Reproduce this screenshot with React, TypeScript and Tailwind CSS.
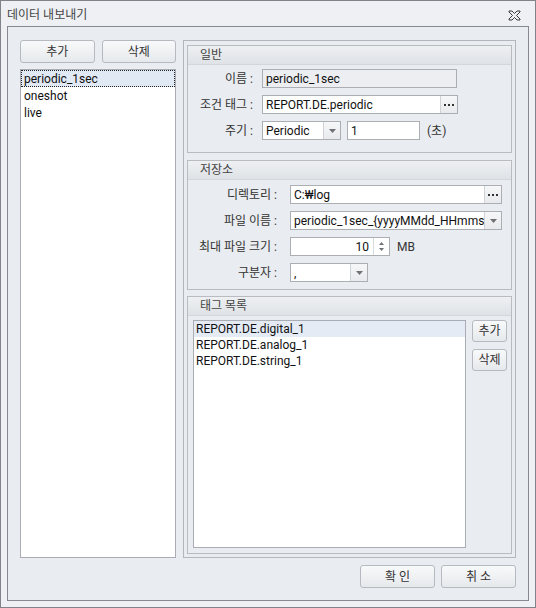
import React from 'react';

function Btn({ children, className = '' }: { children: React.ReactNode; className?: string }) {
  return (
    <div
      className={`flex items-center justify-center rounded-[3px] border border-[#b6bac0] bg-linear-to-b from-[#f8f9fa] to-[#e6e9ec] text-[12px] text-[#333] ${className}`}
    >
      {children}
    </div>
  );
}

function Group({ title, children, className = '' }: { title: string; children: React.ReactNode; className?: string }) {
  return (
    <div className={`flex flex-col border border-[#b8bcc1] ${className}`}>
      <div className="h-[19px] shrink-0 flex items-center pl-[12px] border-b border-[#d3d6da] bg-linear-to-b from-[#eef0f2] to-[#dfe2e6] text-[12px] text-[#444]">
        {title}
      </div>
      {children}
    </div>
  );
}

function Arrow() {
  return (
    <svg width="7" height="4" viewBox="0 0 7 4">
      <path d="M0 0h7L3.5 4z" fill="#6e7175" />
    </svg>
  );
}

function Dots() {
  return (
    <div className="flex gap-[2px]">
      <span className="w-[2px] h-[2px] bg-[#333]" />
      <span className="w-[2px] h-[2px] bg-[#333]" />
      <span className="w-[2px] h-[2px] bg-[#333]" />
    </div>
  );
}

function SideButton({ children }: { children: React.ReactNode }) {
  return (
    <div className="w-[17px] h-full shrink-0 flex items-center justify-center border-l border-[#cfd2d6] bg-linear-to-b from-[#f6f7f8] to-[#e8eaed]">
      {children}
    </div>
  );
}

function Field({
  value,
  width,
  button,
  readOnly,
  alignRight,
}: {
  value: string;
  width: string;
  button?: React.ReactNode;
  readOnly?: boolean;
  alignRight?: boolean;
}) {
  return (
    <div
      className={`h-[19px] flex items-stretch border border-[#abafb4] ${readOnly ? 'bg-[#eceef1]' : 'bg-white'} ${width}`}
    >
      <div
        className={`flex-1 min-w-0 flex items-center overflow-hidden whitespace-nowrap px-[3px] text-[12px] text-[#111] ${alignRight ? 'justify-end pr-[4px]' : ''}`}
      >
        {value}
      </div>
      {button}
    </div>
  );
}

function Row({ label, labelW, children }: { label: string; labelW: string; children: React.ReactNode }) {
  return (
    <div className="flex items-center h-[19px]">
      <div className={`text-right text-[12px] text-[#333] shrink-0 ${labelW}`}>{label}</div>
      {children}
    </div>
  );
}

function Spinner() {
  return (
    <div className="w-[16px] h-full shrink-0 flex flex-col items-center justify-center gap-[3px] border-l border-[#d8dbde]">
      <svg width="5" height="3" viewBox="0 0 5 3">
        <path d="M2.5 0L5 3H0z" fill="#6e7175" />
      </svg>
      <svg width="5" height="3" viewBox="0 0 5 3">
        <path d="M0 0h5L2.5 3z" fill="#6e7175" />
      </svg>
    </div>
  );
}

export default function App() {
  const items = ['periodic_1sec', 'oneshot', 'live'];
  const tags = ['REPORT.DE.digital_1', 'REPORT.DE.analog_1', 'REPORT.DE.string_1'];

  return (
    <div className="w-[536px] h-[608px] flex flex-col border border-[#80848a] bg-[#eef0f3] font-['Roboto','Noto_Sans_CJK_KR',sans-serif] text-[12px] text-[#222]">
      {/* Title bar */}
      <div className="h-[25px] shrink-0 flex items-center justify-between pl-[6px] pr-[14px]">
        <span className="text-[#444] pt-[3px]">데이터 내보내기</span>
        <svg width="13" height="11" viewBox="0 0 13 11" className="mt-[4px]">
          <path
            d="M1 1H4L6.5 3.5L9 1H12V2L8.5 5.5L12 9V10H9L6.5 7.5L4 10H1V9L4.5 5.5L1 2Z"
            fill="none"
            stroke="#3a3a3a"
            strokeWidth="1"
          />
        </svg>
      </div>

      {/* Frame */}
      <div className="flex-1 min-h-0 mx-[6px] mb-[6px] flex flex-col gap-[7px] border border-[#868a90] bg-[#e9ecf0] pt-[13px] px-[12px] pb-[12px]">
        <div className="flex-1 min-h-0 flex gap-[7px]">
          {/* Left column */}
          <div className="w-[156px] shrink-0 flex flex-col gap-[6px]">
            <div className="h-[23px] flex gap-[7px]">
              <Btn className="flex-1">추가</Btn>
              <Btn className="flex-1">삭제</Btn>
            </div>
            <div className="flex-1 border border-[#a9adb3] bg-white">
              {items.map((it, i) => (
                <div
                  key={it}
                  className={`h-[17px] flex items-center px-[2px] text-[12px] text-[#111] ${
                    i === 0 ? 'bg-[#e1e9f4] border border-dotted border-[#222]' : 'border border-transparent'
                  }`}
                >
                  {it}
                </div>
              ))}
            </div>
          </div>

          {/* Right panel */}
          <div className="flex-1 min-w-0 flex flex-col border border-[#b3b7bc] pt-[4px] px-[3px] pb-[3px]">
            <Group title="일반">
              <div className="flex flex-col gap-[7px] pt-[4px] pb-[12px]">
                <Row label="이름 :" labelW="w-[65px] mr-[9px]">
                  <Field value="periodic_1sec" width="w-[195px]" readOnly />
                </Row>
                <Row label="조건 태그 :" labelW="w-[65px] mr-[9px]">
                  <Field
                    value="REPORT.DE.periodic"
                    width="w-[196px]"
                    button={
                      <SideButton>
                        <Dots />
                      </SideButton>
                    }
                  />
                </Row>
                <Row label="주기 :" labelW="w-[65px] mr-[9px]">
                  <Field
                    value="Periodic"
                    width="w-[79px]"
                    button={
                      <SideButton>
                        <Arrow />
                      </SideButton>
                    }
                  />
                  <div className="ml-[6px]">
                    <Field value="1" width="w-[73px]" />
                  </div>
                  <span className="ml-[7px] text-[#333]">(초)</span>
                </Row>
              </div>
            </Group>

            <Group title="저장소" className="mt-[7px]">
              <div className="flex flex-col gap-[7px] pt-[5px] pb-[7px]">
                <Row label="디렉토리 :" labelW="w-[89px] mr-[13px]">
                  <Field
                    value="C:₩log"
                    width="w-[212px]"
                    button={
                      <SideButton>
                        <Dots />
                      </SideButton>
                    }
                  />
                </Row>
                <Row label="파일 이름 :" labelW="w-[89px] mr-[13px]">
                  <Field
                    value="periodic_1sec_{yyyyMMdd_HHmms"
                    width="w-[212px]"
                    button={
                      <SideButton>
                        <Arrow />
                      </SideButton>
                    }
                  />
                </Row>
                <Row label="최대 파일 크기 :" labelW="w-[89px] mr-[13px]">
                  <Field value="10" width="w-[100px]" alignRight button={<Spinner />} />
                  <span className="ml-[7px] text-[#333]">MB</span>
                </Row>
                <Row label="구분자 :" labelW="w-[89px] mr-[13px]">
                  <Field
                    value=","
                    width="w-[78px]"
                    button={
                      <SideButton>
                        <Arrow />
                      </SideButton>
                    }
                  />
                </Row>
              </div>
            </Group>

            <Group title="태그 목록" className="mt-[6px] flex-1 min-h-0">
              <div className="flex-1 min-h-0 flex gap-[6px] pt-[4px] pl-[5px] pr-[4px] pb-[5px]">
                <div className="flex-1 border border-[#a9adb3] bg-white">
                  {tags.map((t, i) => (
                    <div
                      key={t}
                      className={`h-[16px] flex items-center px-[2px] text-[12px] text-[#111] ${
                        i === 0 ? 'bg-[#e4ebf4]' : ''
                      }`}
                    >
                      {t}
                    </div>
                  ))}
                </div>
                <div className="w-[35px] flex flex-col gap-[7px]">
                  <Btn className="h-[22px]">추가</Btn>
                  <Btn className="h-[22px]">삭제</Btn>
                </div>
              </div>
            </Group>
          </div>
        </div>

        {/* Bottom buttons */}
        <div className="h-[23px] shrink-0 flex justify-end gap-[6px]">
          <Btn className="w-[75px]">확 인</Btn>
          <Btn className="w-[75px]">취 소</Btn>
        </div>
      </div>
    </div>
  );
}
